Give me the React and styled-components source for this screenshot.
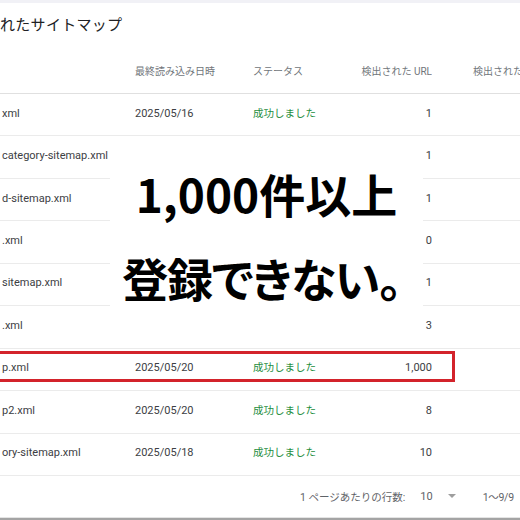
import React from "react";
import styled, { createGlobalStyle } from "styled-components";

const GlobalStyle = createGlobalStyle`
  html, body {
    margin: 0;
    padding: 0;
    width: 520px;
    height: 520px;
    overflow: hidden;
    background: #f1f1f6;
    font-family: Roboto, "Noto Sans CJK JP", sans-serif;
  }
  * { box-sizing: border-box; }
`;

const Page = styled.div`
  width: 520px;
  height: 520px;
  padding-top: 3px;
  display: flex;
  flex-direction: column;
  background: #f1f1f6;
`;

const Card = styled.div`
  flex: 1;
  background: #ffffff;
  display: flex;
  flex-direction: column;
  border-bottom: 1px solid #e4e4e4;
`;

const BottomEdge = styled.div`
  height: 2px;
  background: #a4a4a4;
`;

const Title = styled.h2`
  margin: 0;
  padding: 12px 0 2px 0;
  font-size: 15px;
  line-height: 20px;
  font-weight: 400;
  letter-spacing: 0.3px;
  color: #202124;
  white-space: nowrap;
`;

const cols = `135px 118px 70px 109px 1fr`;

const HeaderRow = styled.div`
  display: grid;
  grid-template-columns: ${cols};
  height: 57px;
  align-items: end;
  padding-bottom: 14px;
  border-bottom: 1px solid #e0e0e0;
  font-size: 10px;
  line-height: 14px;
  color: #70757a;
`;

const HeadCell = styled.div`
  white-space: nowrap;
  overflow: hidden;
  text-align: ${(p) => (p.$right ? "right" : "left")};
  padding-left: ${(p) => p.$pad || 0}px;
`;

const Body = styled.div`
  position: relative;
`;

const Row = styled.div`
  position: relative;
  display: grid;
  grid-template-columns: ${cols};
  height: 42.45px;
  align-items: center;
  padding-bottom: 2px;
  border-bottom: 1px solid #ebebeb;
  font-size: 11px;
  line-height: 14px;
  color: #3c4043;
`;

const Cell = styled.div`
  white-space: nowrap;
  overflow: hidden;
  padding-left: ${(p) => p.$pad || 0}px;
  text-align: ${(p) => (p.$right ? "right" : "left")};
  color: ${(p) => (p.$ok ? "#1e8e3e" : "inherit")};
  font-size: ${(p) => (p.$ok ? "10.5px" : "inherit")};
`;

const Highlight = styled.div`
  position: absolute;
  top: 2px;
  left: -10px;
  width: 465px;
  height: 31px;
  border: 3px solid #d3232b;
  pointer-events: none;
`;

const Overlay = styled.div`
  position: absolute;
  z-index: 2;
  top: 43px;
  left: 110px;
  width: 313px;
  height: 209px;
  background: #ffffff;
  display: flex;
  flex-direction: column;
  align-items: center;
  padding-top: 33px;
  gap: 38px;
`;

const Headline = styled.div`
  font-family: "Noto Sans CJK JP", sans-serif;
  font-weight: 700;
  font-size: 46px;
  line-height: 46px;
  color: #000000;
  white-space: nowrap;
  font-feature-settings: "palt";
  letter-spacing: ${(p) => p.$tight || 0}px;
  margin-left: ${(p) => p.$shift || 0}px;
`;

const Pager = styled.div`
  flex: 1;
  display: flex;
  align-items: center;
  padding-left: 300px;
  font-size: 10.5px;
  color: #5f6368;
  white-space: nowrap;
`;

const PagerLabel = styled.span``;

const PagerSelect = styled.span`
  margin-left: 15px;
  display: inline-flex;
  align-items: center;
  gap: 15px;
  font-size: 11px;
`;

const Caret = styled.span`
  width: 0;
  height: 0;
  border-left: 4px solid transparent;
  border-right: 4px solid transparent;
  border-top: 4px solid #9e9e9e;
`;

const PagerRange = styled.span`
  margin-left: 27px;
  font-size: 10.5px;
  letter-spacing: -0.3px;
`;

const rows = [
  { name: "xml", date: "2025/05/16", ok: true, count: "1" },
  { name: "category-sitemap.xml", count: "1" },
  { name: "d-sitemap.xml", count: "1" },
  { name: ".xml", count: "0" },
  { name: "sitemap.xml", count: "1" },
  { name: ".xml", count: "3" },
  { name: "p.xml", date: "2025/05/20", ok: true, count: "1,000", mark: true },
  { name: "p2.xml", date: "2025/05/20", ok: true, count: "8" },
  { name: "ory-sitemap.xml", date: "2025/05/18", ok: true, count: "10" },
];

export default function App() {
  return (
    <>
      <GlobalStyle />
      <Page>
        <Card>
          <Title>れたサイトマップ</Title>
          <HeaderRow>
            <HeadCell />
            <HeadCell>最終読み込み日時</HeadCell>
            <HeadCell>ステータス</HeadCell>
            <HeadCell $right>検出された URL</HeadCell>
            <HeadCell $pad={41}>検出された</HeadCell>
          </HeaderRow>
          <Body>
            {rows.map((r, i) => (
              <Row key={i}>
                <Cell $pad={2}>{r.name}</Cell>
                <Cell>{r.date || ""}</Cell>
                <Cell $ok={r.ok}>{r.ok ? "成功しました" : ""}</Cell>
                <Cell $right>{r.count}</Cell>
                <Cell />
                {r.mark && <Highlight />}
              </Row>
            ))}
            <Overlay>
              <Headline>1,000件以上</Headline>
              <Headline $tight={-1.2} $shift={-10}>登録できない。</Headline>
            </Overlay>
          </Body>
          <Pager>
            <PagerLabel>1 ページあたりの行数:</PagerLabel>
            <PagerSelect>
              10
              <Caret />
            </PagerSelect>
            <PagerRange>1〜9/9</PagerRange>
          </Pager>
        </Card>
        <BottomEdge />
      </Page>
    </>
  );
}
